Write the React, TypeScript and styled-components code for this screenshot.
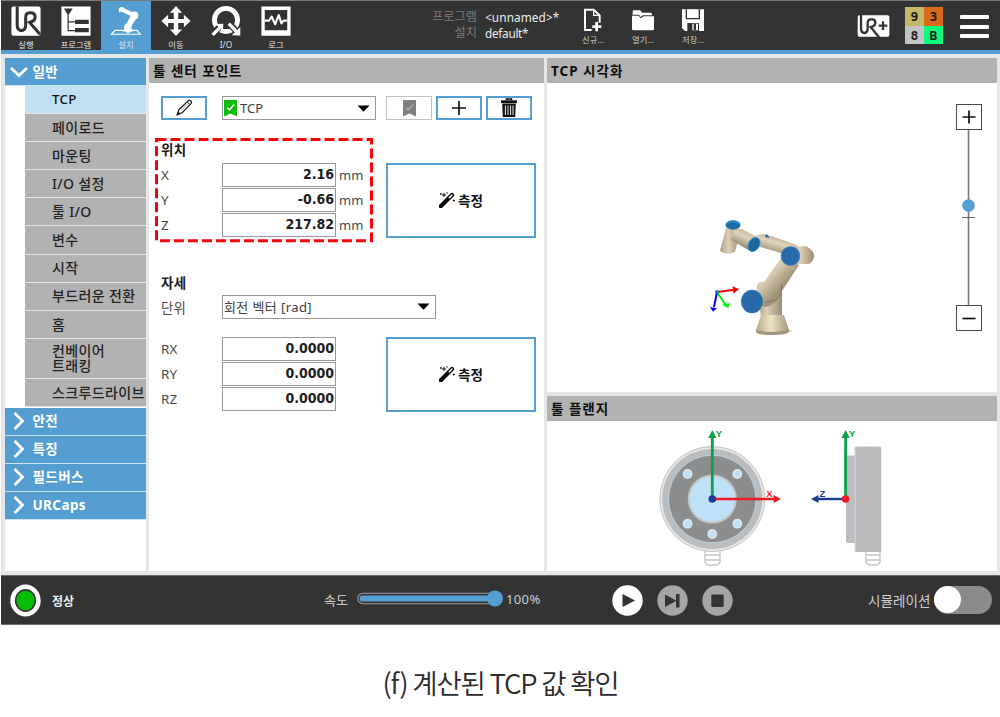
import React from 'react';
import styled, { createGlobalStyle } from 'styled-components';

const BLUE = '#549ed2';
const DARK = '#333333';
const PANEL = '#b2b2b2';
const EDGE = '#e6e6e6';

const GlobalStyle = createGlobalStyle`
  * { box-sizing: border-box; }
  body { margin: 0; background: #fff; }
  button { font: inherit; color: inherit; padding: 0; margin: 0; border: 0; background: none; }
`;

const Page = styled.div`
  width: 1000px;
  height: 717px;
  overflow: hidden;
  padding-left: 1px;
  font-family: 'Noto Sans', 'Noto Sans CJK KR', sans-serif;
  font-size: 14px;
  color: #2b2b2b;
`;

const Header = styled.header`
  display: flex;
  height: 54px;
  background: ${DARK};
  border-top: 1px solid #7a7a7a;
  border-bottom: 4px solid ${BLUE};
`;

const Nav = styled.nav`
  display: flex;
  width: 401px;
`;

const NavTab = styled.button<{ $active?: boolean }>`
  display: flex;
  flex-direction: column;
  align-items: center;
  width: 50px;
  height: 50px;
  padding-top: 5px;
  background: ${p => (p.$active ? BLUE : 'transparent')};
  color: #e4e4e4;
  svg { display: block; }
`;

const TinyLabel = styled.span`
  margin-top: 2px;
  font-size: 8.3px;
  line-height: 12px;
  white-space: nowrap;
`;

const FileInfo = styled.dl`
  display: grid;
  grid-template-columns: 75px 1fr;
  column-gap: 8px;
  align-content: start;
  width: 166px;
  margin: 0;
  padding-top: 8px;
  font-size: 12.5px;
  line-height: 16px;
  dt { color: #7b7b7b; text-align: right; font-size: 12.2px; }
  dd { margin: 0; color: #ececec; font-size: 11.8px; white-space: nowrap; }
`;

const FileName = styled.span<{ $spacing: number }>`
  letter-spacing: ${p => p.$spacing}px;
`;

const FileActions = styled.div`
  display: flex;
  width: 289px;
`;

const FileButton = styled.button`
  display: flex;
  flex-direction: column;
  align-items: center;
  width: 50px;
  height: 49px;
  padding-top: 7px;
  color: #c9c9c9;
  svg { display: block; }
`;

const HeaderEnd = styled.div`
  display: flex;
  align-items: flex-start;
`;

const UrPlus = styled.div`
  margin: 13px 15px 0 0;
  svg { display: block; }
`;

const Checksum = styled.div`
  display: grid;
  grid-template-columns: 19px 19px;
  grid-template-rows: 19px 18px;
  margin: 6px 17px 0 0;
`;

const ChecksumCell = styled.span<{ $bg: string }>`
  display: flex;
  align-items: center;
  justify-content: center;
  background: ${p => p.$bg};
  color: #1c1c1c;
  font: 700 13px/1 'DejaVu Sans Mono', monospace;
`;

const MenuButton = styled.button`
  display: flex;
  flex-direction: column;
  gap: 5.5px;
  width: 29px;
  margin-top: 14px;
  i { height: 4px; background: #fff; border-radius: 1px; }
`;

const Workspace = styled.main`
  display: grid;
  grid-template-columns: 141px 395px 450px;
  column-gap: 3px;
  height: 521px;
  padding: 4px 3px 4px 4px;
  background: ${EDGE};
`;

const Sidebar = styled.aside`
  display: flex;
  flex-direction: column;
  background: #fff;
  overflow: hidden;
`;

const Category = styled.button`
  display: flex;
  align-items: center;
  flex: none;
  height: 28px;
  padding-left: 5px;
  border-bottom: 1px solid #cfe3f2;
  background: ${BLUE};
  color: #fff;
  font-size: 13.5px;
  font-weight: 700;
  letter-spacing: 0.4px;
  line-height: 26px;
  svg { margin-right: 4.5px; }
`;

const ItemList = styled.ul`
  flex: none;
  margin: 0 0 1px;
  padding: 0 0 0 20px;
  list-style: none;
`;

const Item = styled.li<{ $active?: boolean; $tall?: boolean }>`
  display: flex;
  align-items: center;
  height: ${p => (p.$tall ? 40 : 28.1)}px;
  padding-left: 27px;
  border-bottom: 1px solid #e4e4e4;
  background: ${p => (p.$active ? '#c1e0f6' : PANEL)};
  color: ${p => (p.$active ? '#111' : '#242424')};
  font-size: 14px;
  font-weight: 500;
  letter-spacing: 0.35px;
  line-height: 15.5px;
  white-space: pre;
`;

const Latin = styled.span`
  font-size: 13.3px;
`;

const Panel = styled.section`
  display: flex;
  flex-direction: column;
  background: #fff;
`;

const PanelTitle = styled.h2`
  flex: none;
  height: 25px;
  margin: 0;
  padding-left: 4px;
  background: ${PANEL};
  color: #0d0d0d;
  font-size: 13.5px;
  font-weight: 700;
  letter-spacing: 1px;
  line-height: 26px;
`;

const TcpBody = styled.div`
  position: relative;
  padding: 13px 0 0 12px;
`;

const Toolbar = styled.div`
  display: flex;
  height: 24px;
`;

const ToolButton = styled.button<{ $disabled?: boolean }>`
  display: flex;
  align-items: center;
  justify-content: center;
  width: 46px;
  margin-right: 4px;
  border: ${p => (p.$disabled ? '1px solid #c2c2c2' : `2px solid ${BLUE}`)};
  background: #fff;
`;

const Select = styled.div<{ $width: number; $spacing?: number }>`
  display: flex;
  align-items: center;
  width: ${p => p.$width}px;
  height: 24px;
  padding: 0 5px 0 1px;
  border: 1px solid #999;
  background: #fff;
  color: #404040;
  font-size: 13px;
  letter-spacing: ${p => p.$spacing ?? 0}px;
  line-height: 22px;
  svg:last-child { margin-left: auto; }
`;

const SelectText = styled.span`
  margin-left: 3px;
`;

const PickerSlot = styled.div`
  margin: 0 10px 0 11px;
`;

const GroupTitle = styled.h3<{ $top: number }>`
  height: 20px;
  margin: ${p => p.$top}px 0 0;
  font-size: 13.5px;
  font-weight: 700;
  letter-spacing: 0.3px;
  line-height: 20px;
  color: #1c1c1c;
`;

const Fields = styled.div<{ $top: number }>`
  display: grid;
  grid-template-columns: 225px 150px;
  margin-top: ${p => p.$top}px;
`;

const FieldRow = styled.label<{ $top?: number }>`
  display: flex;
  align-items: center;
  height: 25px;
  margin-top: ${p => p.$top ?? 0}px;
  color: #4a4a4a;
  font-size: 13px;
`;

const FieldName = styled.span<{ $raised?: boolean }>`
  width: 61px;
  padding-bottom: ${p => (p.$raised ? 2 : 0)}px;
  font-size: 13.4px;
  letter-spacing: 0.2px;
`;

const NumberBox = styled.span`
  width: 114px;
  height: 24px;
  margin-bottom: 1px;
  padding-right: 1px;
  border: 1px solid #999;
  background: #fff;
  color: #1e1e1e;
  font: 700 14px/20px 'DejaVu Sans Condensed', 'DejaVu Sans', sans-serif;
  font-stretch: condensed;
  text-align: right;
`;

const Unit = styled.span`
  margin-left: 3px;
  padding-bottom: 2px;
`;

const MeasureButton = styled.button`
  display: flex;
  align-items: center;
  justify-content: center;
  gap: 3px;
  height: 75px;
  padding-bottom: 2px;
  border: 2px solid ${BLUE};
  background: #fff;
  font-size: 13.5px;
  font-weight: 700;
  color: #111;
`;

const Highlight = styled.svg`
  position: absolute;
  left: 6px;
  top: 54px;
  pointer-events: none;
`;

const RightColumn = styled.div`
  display: grid;
  grid-template-rows: 334px 175px;
  row-gap: 4px;
`;

const Viewer = styled.div`
  display: flex;
  height: 309px;
`;

const ZoomControl = styled.div`
  display: flex;
  flex-direction: column;
  align-items: center;
  width: 26px;
  margin: 21px 0 0 9px;
  svg { display: block; }
`;

const Footer = styled.footer`
  display: grid;
  grid-template-columns: 323px 288px 256px 1fr;
  align-items: center;
  height: 50px;
  border-top: 1px solid #6c6c6c;
  border-bottom: 1px solid #6c6c6c;
  background: ${DARK};
  color: #cfcfcf;
`;

const Cell = styled.div<{ $left?: number; $gap?: number }>`
  display: flex;
  align-items: center;
  padding-left: ${p => p.$left ?? 0}px;
  gap: ${p => p.$gap ?? 0}px;
  font-size: 13px;
  svg { display: block; flex: none; }
`;

const Status = styled.span`
  margin-top: 2px;
  font-size: 12px;
  font-weight: 700;
  color: #eee;
`;

const SpeedText = styled.span`
  margin-top: -1px;
`;

const SpeedWrap = styled.div`
  display: flex;
  align-items: center;
  gap: 2px;
  margin-top: -4px;
`;

const SpeedValue = styled.span`
  margin-top: 2px;
  letter-spacing: 0.4px;
`;

const Toggle = styled.span`
  display: flex;
  width: 58px;
  height: 28px;
  border-radius: 14px;
  background: #8b8b8b;
`;

const Knob = styled.i`
  width: 27px;
  height: 27px;
  border-radius: 50%;
  background: #fff;
`;

const SimLabel = styled.span`
  width: 66px;
  font-size: 13.5px;
  letter-spacing: 0.1px;
`;

const Caption = styled.p`
  margin: 38px 0 0;
  text-align: center;
  font-family: 'Noto Sans CJK KR', sans-serif;
  font-weight: 350;
  font-size: 27.6px;
  line-height: 38px;
  letter-spacing: -1.25px;
  color: #2d2a2b;
`;

/* Navigation icons share a 3x grid, 96 units per 32px */
const Icon32 = ({ children }: { children: React.ReactNode }) => (
  <svg width="32" height="34" viewBox="0 0 96 102">{children}</svg>
);

const RunIcon = () => (
  <Icon32>
    <rect x="0" y="2" width="96" height="96" rx="7" fill="#fff" />
    <path d="M19 2V62Q19 81 33 81Q47 81 47 62V37Q47 22 60 22H63Q78 22 78 36Q78 47 68 51L60 54L94 93" fill="none" stroke={DARK} strokeWidth="10" />
  </Icon32>
);

const ProgramIcon = () => (
  <Icon32>
    <rect x="0" y="2" width="96" height="96" rx="2" fill="#fff" />
    <path d="M8 8H37L25 27H20Z" fill={DARK} />
    <path d="M22 26V81H46M22 52H46" fill="none" stroke={DARK} strokeWidth="4" />
    <path d="M45 45H90V59H45ZM45 72H90V86H45Z" fill={DARK} />
  </Icon32>
);

const InstallIcon = () => (
  <Icon32>
    <path d="M12 80H84L95 93H0Z" fill="none" stroke="#fff" strokeWidth="4" />
    <path d="M36 84L44 74H66L73 84Z" fill="#fff" />
    <path d="M55 79L53 69L74 35" fill="none" stroke="#fff" strokeWidth="19" strokeLinecap="round" />
    <path d="M33 11L76 31" stroke="#fff" strokeWidth="14" strokeLinecap="round" />
    <circle cx="76" cy="31" r="13" fill="#fff" />
    <circle cx="55" cy="69" r="13" fill="#fff" />
    <path d="M24 9Q34 -2 43 8L36 21L30 18L25 22Z" fill="#fff" />
    <path d="M45 60L54 53M62 75Q70 72 69 64" stroke={BLUE} strokeWidth="2.5" fill="none" />
  </Icon32>
);

const MoveIcon = () => (
  <Icon32>
    <path d="M48 0L68 22H55V43H74V29L96 49L74 70V56H55V77H68L48 99L28 77H41V56H22V70L0 49L22 29V43H41V22H28Z" fill="#fff" />
    <path d="M36 37H60V61H36Z" fill="none" stroke={DARK} strokeWidth="3" />
    <path d="M41 22H55V77H41ZM22 43H74V56H22Z" fill="#fff" />
  </Icon32>
);

const IoIcon = () => (
  <Icon32>
    <circle cx="48" cy="46" r="38" fill="none" stroke="#fff" strokeWidth="16" />
    <path d="M2 94L26 70M60 60L84 84" stroke={DARK} strokeWidth="21" />
    <path d="M4 95L28 71" stroke="#fff" strokeWidth="11" />
    <path d="M14 59L39 58L38 84Z" fill="#fff" />
    <path d="M57 58L82 83" stroke="#fff" strokeWidth="11" />
    <path d="M95 69V97L67 96Z" fill="#fff" />
  </Icon32>
);

const LogIcon = () => (
  <Icon32>
    <path d="M0 2H96V98H0ZM11 13V80H85V13Z" fill="#fff" fillRule="evenodd" />
    <path d="M11 48H25L34 35L45 60L57 30L66 57L73 48H85" fill="none" stroke="#fff" strokeWidth="7" strokeLinejoin="round" />
  </Icon32>
);

const NewIcon = () => (
  <svg width="22" height="24" viewBox="0 0 66 72">
    <path d="M29 66H9V5H35L53 22V44" fill="none" stroke="#fff" strokeWidth="6" />
    <path d="M35 5V22H53" fill="none" stroke="#fff" strokeWidth="4" />
    <path d="M44 42V70M31 56H58" stroke="#fff" strokeWidth="8" />
  </svg>
);

const OpenIcon = () => (
  <svg width="24" height="24" viewBox="0 0 72 72">
    <path d="M5 14V11Q5 7 9 7H28L33 14H59Q63 14 63 19V22H36L29 27L24 20H5Z" fill="#fff" />
    <path d="M3 23H23L29 31L38 25H69V63Q69 67 65 67H7Q3 67 3 63Z" fill="#fff" />
  </svg>
);

const SaveIcon = () => (
  <svg width="24" height="24" viewBox="0 0 72 72">
    <path d="M3 4H69V69H12L3 60Z" fill="#fff" />
    <path d="M14 4H57V34H14ZM19 45H54V69H19Z" fill={DARK} />
    <path d="M18 4H53V30H18ZM34 47H51V67H34Z" fill="#fff" />
    <path d="M38 48H45V66H38Z" fill={DARK} />
  </svg>
);

const UrPlusIcon = () => (
  <svg width="33" height="24" viewBox="0 0 99 72">
    <rect x="2" y="4" width="95" height="64" rx="5" fill="#fff" />
    <path d="M12 2V42Q12 57 22 57Q32 57 32 42V28Q32 16 42 16H46Q55 16 55 26Q55 34 47 37L41 39L66 70" fill="none" stroke={DARK} strokeWidth="7" />
    <path d="M78 22V48M65 35H91" stroke={DARK} strokeWidth="7" />
  </svg>
);

const Chevron = ({ open }: { open?: boolean }) => (
  <svg width="18" height="20" viewBox="0 0 18 20">
    <path d={open ? 'M1 6L9 13.5L17 6' : 'M4.5 2L12.5 10L4.5 18'} fill="none" stroke="#fff" strokeWidth="2.8" />
  </svg>
);

const PencilIcon = () => (
  <svg width="18" height="18" viewBox="0 0 18 18">
    <path d="M2 16L4 10.5L13.5 1.6Q14.6 .8 15.8 2Q17 3.2 16.2 4.3L7 13.8Z" fill="#fff" stroke="#111" strokeWidth="1.2" strokeLinejoin="round" />
    <path d="M12.2 3L15 5.6" stroke="#111" strokeWidth="1" />
    <path d="M6.5 11L12.5 5" stroke="#777" strokeWidth=".7" />
    <path d="M1.5 16.5L3.3 12.6L5.6 14.6Z" fill="#111" />
  </svg>
);

const Bookmark = ({ color, check }: { color: string; check: string }) => (
  <svg width="13" height="17" viewBox="0 0 13 17">
    <path d="M0 0H13V16.5L6.5 13.5L0 16.5Z" fill={color} />
    <path d="M3 7.5L5.3 9.8L10.3 4.5" fill="none" stroke={check} strokeWidth="1.5" />
  </svg>
);

const PlusIcon = () => (
  <svg width="16" height="16" viewBox="0 0 16 16">
    <path d="M8 1V15M1 8H15" stroke="#111" strokeWidth="1.7" />
  </svg>
);

const TrashIcon = () => (
  <svg width="18" height="20" viewBox="0 0 18 20">
    <path d="M6.5 2.2V.9H11.5V2.2" fill="none" stroke="#111" strokeWidth="1.5" />
    <path d="M1 2.3H17V5H1Z" fill="#111" />
    <path d="M2.2 5.5H15.8L15.2 19H2.8Z" fill="#111" />
    <path d="M5.4 7.5V17M8 7.5V17M10.6 7.5V17M13 7.5V17" stroke="#fff" strokeWidth=".9" />
  </svg>
);

const Caret = () => (
  <svg width="13" height="7" viewBox="0 0 13 7"><path d="M.5 .5H12.5L6.5 6.7Z" fill="#000" /></svg>
);

const WandIcon = () => (
  <svg width="16" height="16" viewBox="0 0 16 16">
    <path d="M1.8 14.2L13 3" stroke="#0a0a0a" strokeWidth="4.2" strokeLinecap="round" />
    <path d="M10.4 5.6L13 3" stroke="#fff" strokeWidth="1.6" strokeLinecap="round" />
    <path d="M5 1V5M3 3H7M1.8 1.2V2.8M1 2H2.6M8 .2V1.8M14.8 7.5V9.5M13.8 8.5H15.8" stroke="#0a0a0a" strokeWidth="1" />
  </svg>
);

const Robot = () => (
  <svg width="400" height="309" viewBox="547 83 400 309">
    <defs>
      <linearGradient id="tube" x1="0" x2="1">
        <stop offset="0" stopColor="#a99c82" />
        <stop offset=".4" stopColor="#ddd0b6" />
        <stop offset="1" stopColor="#988b73" />
      </linearGradient>
      <linearGradient id="foot" x1="0" x2="1">
        <stop offset="0" stopColor="#b5a88b" />
        <stop offset=".45" stopColor="#efe5c4" />
        <stop offset="1" stopColor="#a3967c" />
      </linearGradient>
      <linearGradient id="arm" x1="765" y1="265" x2="785" y2="283" gradientUnits="userSpaceOnUse">
        <stop offset="0" stopColor="#c4b69b" />
        <stop offset=".4" stopColor="#d9ccb2" />
        <stop offset="1" stopColor="#a29479" />
      </linearGradient>
      <linearGradient id="fore" x1="775" y1="235" x2="770" y2="252" gradientUnits="userSpaceOnUse">
        <stop offset="0" stopColor="#b8ab91" />
        <stop offset=".4" stopColor="#e0d4bb" />
        <stop offset="1" stopColor="#a4967c" />
      </linearGradient>
      <linearGradient id="wrist" x1="748" y1="231" x2="741" y2="246" gradientUnits="userSpaceOnUse">
        <stop offset="0" stopColor="#c9bca2" />
        <stop offset=".4" stopColor="#ded2ba" />
        <stop offset="1" stopColor="#9c8f76" />
      </linearGradient>
    </defs>
    <path d="M757 288L762 284H782V317H761Z" fill="url(#tube)" />
    <path d="M761 315H784L789 330Q789 334 773 334Q756 334 756 330Z" fill="url(#foot)" />
    <path d="M756 330Q772 334 789 330V332Q787 335 773 335Q757 335 756 332Z" fill="#a3977f" />
    <path d="M789 331H792" stroke="#c8b889" strokeWidth="1" />
    <path d="M752 236L763 234L771 236L797 245V259L784 254L757 246Z" fill="url(#fore)" />
    <path d="M766 234Q769 235 769 238L765 237Z" fill="#286eab" />
    <path d="M791 247L806 246Q815 251 814 257Q812 265 806 264H794Z" fill="url(#tube)" />
    <path d="M757 286Q759 281 764 282L782 257L799 265L780 294Q778 304 766 307L756 304Z" fill="url(#arm)" />
    <path d="M765 302Q779 302 781 292L782 284" fill="none" stroke="#807560" strokeWidth="1" />
    <path d="M726 228L741 229L735 252Q727 256 720 251Z" fill="url(#tube)" />
    <path d="M734 229L742 229L759 238L750 251L731 240Z" fill="url(#wrist)" />
    <ellipse cx="733" cy="225" rx="7.5" ry="4.7" fill="#1e6aa8" />
    <path d="M726 224Q733 219 740 224" fill="none" stroke="#2e91d3" strokeWidth="1.6" />
    <ellipse cx="754" cy="244.5" rx="5.5" ry="7.5" transform="rotate(30 754 244.5)" fill="#1d669f" stroke="#3195cf" strokeWidth=".8" />
    <circle cx="790.5" cy="256" r="9.4" fill="#2869a7" stroke="#2f82bd" strokeWidth=".7" />
    <ellipse cx="752" cy="301.5" rx="10.7" ry="11.5" fill="#2869a7" stroke="#2f82bd" strokeWidth=".7" />
    <path d="M717 292L733 290" stroke="#f00" strokeWidth="2" />
    <path d="M732.5 286.3L739 289.3L733.5 293.5Z" fill="#f00" />
    <path d="M717 292L725 304" stroke="#0e0" strokeWidth="2" />
    <path d="M729.5 303L722 304.5L728.5 308.3Z" fill="#0e0" />
    <path d="M717 292L714 307" stroke="#00f" strokeWidth="2" />
    <path d="M710 307L717 308.2L713 311.8Z" fill="#00f" />
    <circle cx="717" cy="292" r="2" fill="#2477aa" />
  </svg>
);

const holes = [[687.6, 474], [737.3, 474], [687.6, 523.7], [737.3, 523.7], [712.3, 534]];

const FlangeDrawing = () => (
  <svg width="450" height="150" viewBox="547 421 450 150">
    <path d="M705 551V562Q706 565 709 565H716Q719 565 720 562V551M705 555H720M705 560H720" fill="#fff" stroke="#c5c6c8" strokeWidth="1.4" />
    <circle cx="712.3" cy="499" r="52.5" fill="#e6e6e7" stroke="#c2c3c5" strokeWidth="1" />
    <circle cx="712.3" cy="499" r="50" fill="#bbbcbe" />
    <circle cx="712.3" cy="499" r="43.8" fill="#8c8d8f" stroke="#b9d3e4" strokeWidth="1" />
    <circle cx="712.3" cy="499" r="23.7" fill="#bfe1f8" stroke="#c3c2c0" strokeWidth="1.8" />
    {holes.map(([x, y]) => (
      <circle key={`${x}-${y}`} cx={x} cy={y} r="4.2" fill="#bfe1f8" stroke="#e4e8ea" strokeWidth="1.4" />
    ))}
    <path d="M712.3 499V436" stroke="#0aa14b" strokeWidth="2.8" />
    <path d="M708.2 438L712.3 430L716.4 438Z" fill="#0aa14b" />
    <path d="M712.3 499H775" stroke="#ed1c24" strokeWidth="2.4" />
    <path d="M773.5 495L781 499L773.5 503Z" fill="#ed1c24" />
    <circle cx="712.3" cy="499" r="3.8" fill="#1c3b94" />
    <g fontFamily="Liberation Sans, sans-serif" fontWeight="700" fontSize="9.5">
      <text x="715.8" y="437.3" fill="#0aa14b">Y</text>
      <text x="766.3" y="496.7" fill="#ed1c24">X</text>
      <text x="849.1" y="437.3" fill="#0aa14b">Y</text>
      <text x="819.4" y="496.7" fill="#1c3b94">Z</text>
    </g>
    <path d="M866 551V562Q867 565 870 565H876Q879 565 880 562V551M866 555H880M866 560H880" fill="#fff" stroke="#c5c6c8" strokeWidth="1.4" />
    <path d="M846 455.5H855V543H848Q846 543 846 540Z" fill="#bbbcbe" />
    <rect x="854.8" y="446.5" width="26.5" height="105.5" rx="1.8" fill="#bbbcbe" />
    <path d="M855.2 449V550" stroke="#d3dfe7" strokeWidth=".8" />
    <path d="M845.6 499V436" stroke="#0aa14b" strokeWidth="2.8" />
    <path d="M841.5 438L845.6 430L849.7 438Z" fill="#0aa14b" />
    <path d="M845.6 499H817" stroke="#1c3b94" strokeWidth="2.4" />
    <path d="M818.5 495L811 499L818.5 503Z" fill="#1c3b94" />
    <circle cx="845.6" cy="499" r="3.8" fill="#ed1c24" />
  </svg>
);

const navTabs = [
  { label: '실행', icon: <RunIcon /> },
  { label: '프로그램', icon: <ProgramIcon /> },
  { label: '설치', icon: <InstallIcon />, active: true },
  { label: '이동', icon: <MoveIcon /> },
  { label: 'I/O', icon: <IoIcon /> },
  { label: '로그', icon: <LogIcon /> },
];

const sideItems = ['페이로드', '마운팅', 'I/O 설정', '툴 I/O', '변수', '시작', '부드러운 전환', '홈', '컨베이어\n트래킹', '스크루드라이브'];

const NumberField = ({ name, value, unit }: { name: string; value: string; unit?: string }) => (
  <FieldRow>
    <FieldName $raised>{name}</FieldName>
    <NumberBox>{value}</NumberBox>
    {unit && <Unit>{unit}</Unit>}
  </FieldRow>
);

const Measure = () => (
  <MeasureButton><WandIcon />측정</MeasureButton>
);

const SpeedBar = () => (
  <SpeedWrap>
    <svg width="147" height="17" viewBox="0 0 147 17">
      <rect x=".8" y="3.3" width="141" height="10.4" rx="5.2" fill={DARK} stroke="#9b9b9b" strokeWidth="1.1" />
      <rect x="2.6" y="5.4" width="138" height="6.2" rx="3.1" fill={BLUE} />
      <circle cx="138" cy="8.5" r="8" fill={BLUE} />
    </svg>
    <SpeedValue>100%</SpeedValue>
  </SpeedWrap>
);

export default function App() {
  return (
    <Page>
      <GlobalStyle />
      <Header>
        <Nav>
          {navTabs.map(t => (
            <NavTab key={t.label} $active={t.active}>
              {t.icon}
              <TinyLabel>{t.label}</TinyLabel>
            </NavTab>
          ))}
        </Nav>
        <FileInfo>
          <dt>프로그램</dt>
          <dd><FileName $spacing={0.1}>&lt;unnamed&gt;*</FileName></dd>
          <dt>설치</dt>
          <dd><FileName $spacing={-0.3}>default*</FileName></dd>
        </FileInfo>
        <FileActions>
          <FileButton><NewIcon /><TinyLabel>신규...</TinyLabel></FileButton>
          <FileButton><OpenIcon /><TinyLabel>열기...</TinyLabel></FileButton>
          <FileButton><SaveIcon /><TinyLabel>저장...</TinyLabel></FileButton>
        </FileActions>
        <HeaderEnd>
          <UrPlus><UrPlusIcon /></UrPlus>
          <Checksum>
            <ChecksumCell $bg="#c4b968">9</ChecksumCell>
            <ChecksumCell $bg="#d9691b">3</ChecksumCell>
            <ChecksumCell $bg="#c4c4c4">8</ChecksumCell>
            <ChecksumCell $bg="#0cfc7c">B</ChecksumCell>
          </Checksum>
          <MenuButton><i /><i /><i /></MenuButton>
        </HeaderEnd>
      </Header>

      <Workspace>
        <Sidebar>
          <Category><Chevron open />일반</Category>
          <ItemList>
            <Item $active><Latin>TCP</Latin></Item>
            {sideItems.map(s => (
              <Item key={s} $tall={s.includes('\n')}>{s}</Item>
            ))}
          </ItemList>
          <Category><Chevron />안전</Category>
          <Category><Chevron />특징</Category>
          <Category><Chevron />필드버스</Category>
          <Category><Chevron />URCaps</Category>
        </Sidebar>

        <Panel>
          <PanelTitle>툴 센터 포인트</PanelTitle>
          <TcpBody>
            <Toolbar>
              <ToolButton><PencilIcon /></ToolButton>
              <PickerSlot>
                <Select $width={154}>
                  <Bookmark color="#0cbc0c" check="#fff" />
                  <SelectText>TCP</SelectText>
                  <Caret />
                </Select>
              </PickerSlot>
              <ToolButton $disabled><Bookmark color="#808080" check="#ababab" /></ToolButton>
              <ToolButton><PlusIcon /></ToolButton>
              <ToolButton><TrashIcon /></ToolButton>
            </Toolbar>

            <GroupTitle $top={20}>위치</GroupTitle>
            <Fields $top={3}>
              <div>
                <NumberField name="X" value="2.16" unit="mm" />
                <NumberField name="Y" value="-0.66" unit="mm" />
                <NumberField name="Z" value="217.82" unit="mm" />
              </div>
              <Measure />
            </Fields>

            <GroupTitle $top={35}>자세</GroupTitle>
            <FieldRow $top={1}>
              <FieldName>단위</FieldName>
              <Select $width={214} $spacing={0.4}>회전 벡터 [rad]<Caret /></Select>
            </FieldRow>
            <Fields $top={18}>
              <div>
                <NumberField name="RX" value="0.0000" />
                <NumberField name="RY" value="0.0000" />
                <NumberField name="RZ" value="0.0000" />
              </div>
              <Measure />
            </Fields>
            <Highlight width="218" height="106" viewBox="0 0 218 106">
              <rect x="1.5" y="2.4" width="215" height="101.4" fill="none" stroke="#fb0007" strokeWidth="3" strokeDasharray="10 4" />
            </Highlight>
          </TcpBody>
        </Panel>

        <RightColumn>
          <Panel>
            <PanelTitle>TCP 시각화</PanelTitle>
            <Viewer>
              <Robot />
              <ZoomControl>
                <svg width="26" height="228" viewBox="0 0 26 228">
                  <path d="M12.5 26V201" stroke="#777" strokeWidth="1.6" />
                  <path d="M6 113.5H19" stroke="#666" strokeWidth="1" />
                  <circle cx="12.5" cy="101.5" r="6.3" fill={BLUE} />
                  <rect x=".5" y=".5" width="25" height="25" fill="#fff" stroke="#4a4a4a" />
                  <path d="M13 6.5V19.5M6.5 13H19.5" stroke="#111" strokeWidth="1.7" />
                  <rect x=".5" y="201.5" width="25" height="25" fill="#fff" stroke="#4a4a4a" />
                  <path d="M6.5 214.5H19.5" stroke="#111" strokeWidth="1.7" />
                </svg>
              </ZoomControl>
            </Viewer>
          </Panel>
          <Panel>
            <PanelTitle>툴 플랜지</PanelTitle>
            <FlangeDrawing />
          </Panel>
        </RightColumn>
      </Workspace>

      <Footer>
        <Cell $left={9} $gap={11}>
          <svg width="31" height="33" viewBox="0 0 31 33">
            <ellipse cx="15.5" cy="16.5" rx="15.2" ry="16" fill="#fff" />
            <ellipse cx="15.5" cy="16.5" rx="10.6" ry="11.4" fill="#333" />
            <ellipse cx="15.5" cy="16.5" rx="9.1" ry="9.8" fill="#05bd05" />
          </svg>
          <Status>정상</Status>
        </Cell>
        <Cell $gap={9}>
          <SpeedText>속도</SpeedText>
          <SpeedBar />
        </Cell>
        <Cell $gap={14.2}>
          <svg width="31" height="31" viewBox="0 0 31 31">
            <circle cx="15.5" cy="15.5" r="15.2" fill="#fff" />
            <path d="M10.5 9V22L23 15.5Z" fill={DARK} />
          </svg>
          <svg width="31" height="31" viewBox="0 0 31 31">
            <circle cx="15.5" cy="15.5" r="15.2" fill="#a5a5a5" />
            <path d="M8 9.5V22L19 16V22.5H22.5V9H19V15.5Z" fill={DARK} />
          </svg>
          <svg width="31" height="31" viewBox="0 0 31 31">
            <circle cx="15.5" cy="15.5" r="15.2" fill="#a5a5a5" />
            <rect x="9.3" y="9.5" width="12.4" height="12.4" rx="1" fill={DARK} />
          </svg>
        </Cell>
        <Cell>
          <SimLabel>시뮬레이션</SimLabel>
          <Toggle><Knob /></Toggle>
        </Cell>
      </Footer>

      <Caption>(f) 계산된 TCP 값 확인</Caption>
    </Page>
  );
}
